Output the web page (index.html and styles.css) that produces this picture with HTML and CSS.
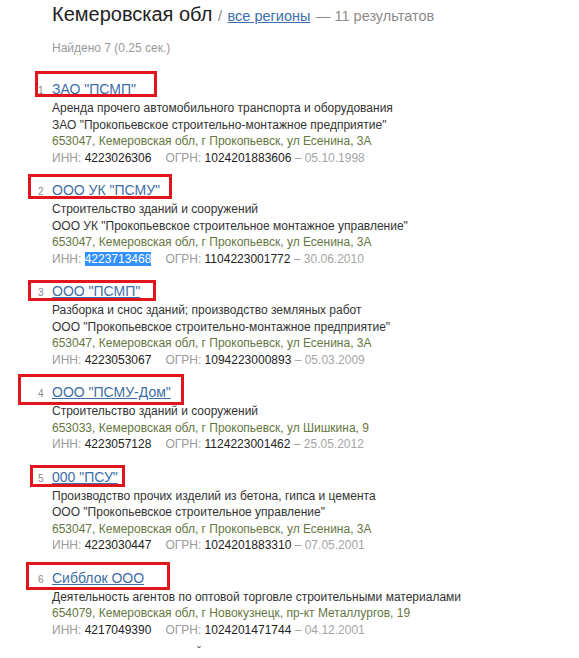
FILE: index.html
```html
<!DOCTYPE html>
<html lang="ru">
<head>
<meta charset="utf-8">
<title>Кемеровская обл — результаты</title>
<link rel="stylesheet" href="styles.css">
</head>
<body>
<div class="page">
  <h1 class="heading">Кемеровская обл <span class="sep">/</span> <a href="#" class="regions">все регионы</a> <span class="count">— 11 результатов</span></h1>
  <p class="found">Найдено 7 (0.25 сек.)</p>

  <ol class="results">
    <li class="result">
      <span class="num">1</span><a href="#" class="name">ЗАО "ПСМП"</a>
      <div class="line">Аренда прочего автомобильного транспорта и оборудования</div>
      <div class="line">ЗАО "Прокопьевское строительно-монтажное предприятие"</div>
      <div class="line addr">653047, Кемеровская обл, г Прокопьевск, ул Есенина, 3А</div>
      <div class="line ids"><span class="lbl">ИНН:</span> <span class="val">4223026306</span><span class="lbl ogrn">ОГРН:</span> <span class="val">1024201883606</span> <span class="date">– 05.10.1998</span></div>
    </li>
    <li class="result">
      <span class="num">2</span><a href="#" class="name">ООО УК "ПСМУ"</a>
      <div class="line">Строительство зданий и сооружений</div>
      <div class="line">ООО УК "Прокопьевское строительное монтажное управление"</div>
      <div class="line addr">653047, Кемеровская обл, г Прокопьевск, ул Есенина, 3А</div>
      <div class="line ids"><span class="lbl">ИНН:</span> <span class="val selected">4223713468</span><span class="lbl ogrn">ОГРН:</span> <span class="val">1104223001772</span> <span class="date">– 30.06.2010</span></div>
    </li>
    <li class="result">
      <span class="num">3</span><a href="#" class="name">ООО "ПСМП"</a>
      <div class="line">Разборка и снос зданий; производство земляных работ</div>
      <div class="line">ООО "Прокопьевское строительно-монтажное предприятие"</div>
      <div class="line addr">653047, Кемеровская обл, г Прокопьевск, ул Есенина, 3А</div>
      <div class="line ids"><span class="lbl">ИНН:</span> <span class="val">4223053067</span><span class="lbl ogrn">ОГРН:</span> <span class="val">1094223000893</span> <span class="date">– 05.03.2009</span></div>
    </li>
    <li class="result">
      <span class="num">4</span><a href="#" class="name">ООО "ПСМУ-Дом"</a>
      <div class="line">Строительство зданий и сооружений</div>
      <div class="line addr">653033, Кемеровская обл, г Прокопьевск, ул Шишкина, 9</div>
      <div class="line ids"><span class="lbl">ИНН:</span> <span class="val">4223057128</span><span class="lbl ogrn">ОГРН:</span> <span class="val">1124223001462</span> <span class="date">– 25.05.2012</span></div>
    </li>
    <li class="result">
      <span class="num">5</span><a href="#" class="name">000 "ПСУ"</a>
      <div class="line">Производство прочих изделий из бетона, гипса и цемента</div>
      <div class="line">ООО "Прокопьевское строительное управление"</div>
      <div class="line addr">653047, Кемеровская обл, г Прокопьевск, ул Есенина, 3А</div>
      <div class="line ids"><span class="lbl">ИНН:</span> <span class="val">4223030447</span><span class="lbl ogrn">ОГРН:</span> <span class="val">1024201883310</span> <span class="date">– 07.05.2001</span></div>
    </li>
    <li class="result">
      <span class="num">6</span><a href="#" class="name">Сибблок ООО</a>
      <div class="line">Деятельность агентов по оптовой торговле строительными материалами</div>
      <div class="line addr">654079, Кемеровская обл, г Новокузнецк, пр-кт Металлургов, 19</div>
      <div class="line ids"><span class="lbl">ИНН:</span> <span class="val">4217049390</span><span class="lbl ogrn">ОГРН:</span> <span class="val">1024201471744</span> <span class="date">– 04.12.2001</span></div>
    </li>
  </ol>
  <div class="more">ˇ</div>

  <div class="mark mark-1"></div>
  <div class="mark mark-2"></div>
  <div class="mark mark-3"></div>
  <div class="mark mark-4"></div>
  <div class="mark mark-5"></div>
  <div class="mark mark-6"></div>
</div>
</body>
</html>
```
FILE: styles.css
```css
html, body {
  margin: 0;
  padding: 0;
  background: #fff;
}

body {
  font-family: "Liberation Sans", Arial, sans-serif;
  color: #333;
  overflow: hidden;
}

.page {
  position: relative;
  padding-top: 2px;
  height: 656px;
}

.heading {
  margin: 0 0 0 52px;
  font-weight: normal;
  font-size: 20px;
  line-height: 24px;
  color: #222;
  white-space: nowrap;
}

.heading .sep,
.heading .count {
  font-size: 14.5px;
  color: #8a8a8a;
}

.heading .regions {
  font-size: 14.5px;
  color: #3a6eae;
  text-decoration: underline;
}

.found {
  margin: 12px 0 0 52px;
  font-size: 12px;
  line-height: 16px;
  color: #999;
}

.results {
  list-style: none;
  margin: 23px 0 0;
  padding: 0 0 0 38px;
}

.result {
  display: grid;
  grid-template-columns: 14px auto;
  justify-content: start;
  align-items: baseline;
  margin-bottom: 14px;
}

.num {
  grid-column: 1;
  grid-row: 1;
  font-size: 10px;
  color: #888;
}

.name {
  grid-column: 2;
  grid-row: 1;
  justify-self: start;
  font-size: 14px;
  line-height: 20px;
  margin-bottom: 1px;
  color: #3d6ea6;
  text-decoration: underline;
}

.line {
  grid-column: 2;
  font-size: 12px;
  line-height: 16.5px;
  color: #333;
  white-space: nowrap;
}

.addr {
  color: #66763f;
}

.lbl {
  color: #9a9a9a;
}

.val {
  color: #222;
}

.ogrn {
  margin-left: 14px;
}

.selected {
  background: #3390ff;
  color: #fff;
}

.date {
  color: #a5a5a5;
}

.more {
  margin: -4px 0 0 197px;
  font-size: 12px;
  line-height: 8px;
  color: #555;
}

.mark {
  position: absolute;
  box-sizing: border-box;
  border: 3px solid #e2141c;
}

.mark-1 { left: 35px; top: 71px; width: 122px; height: 26px; }
.mark-2 { left: 28px; top: 174px; width: 144px; height: 25px; }
.mark-3 { left: 28px; top: 280px; width: 128px; height: 21px; }
.mark-4 { left: 18px; top: 374px; width: 166px; height: 31px; }
.mark-5 { left: 30px; top: 465px; width: 95px; height: 22px; }
.mark-6 { left: 26px; top: 562px; width: 144px; height: 28px; }
```
